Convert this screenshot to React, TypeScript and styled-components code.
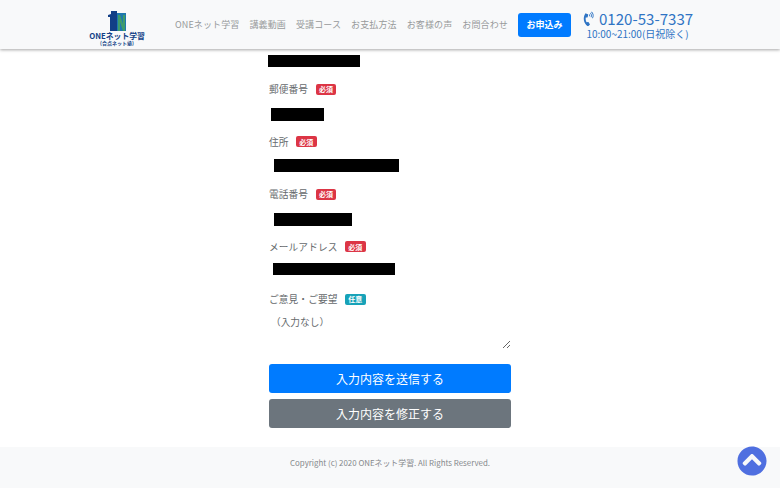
import styled, { createGlobalStyle } from "styled-components";
import { FaChevronCircleUp, FaPhoneVolume } from "react-icons/fa";

const fontStack = `"Noto Sans CJK JP", "Noto Sans", sans-serif`;

const navItems = ["ONEネット学習", "講義動画", "受講コース", "お支払方法", "お客様の声", "お問合わせ"];

const fields = [
  { label: "郵便番号", width: 53, left: 2, top: 11, height: 13 },
  { label: "住所", width: 125, left: 5, top: 9.5, height: 13 },
  { label: "電話番号", width: 78, left: 5, top: 11, height: 13 },
  { label: "メールアドレス", width: 122, left: 4, top: 8, height: 12 },
];

const App = () => {
  return (
    <Page>
      <GlobalStyle />
      <Header>
        <LogoBox>
          <svg width="18" height="21" viewBox="0 0 18 21">
            <path d="M0 5l3-1V1h6v20H2V7H0z" fill="#123f86" />
            <path d="M9 3h9v18H9z" fill="#1f78ad" />
            <path d="M10 21V5h2l3 9V5h2v16h-2l-3-9v9z" fill="#3f9c6a" />
          </svg>
          <LogoName>ONEネット学習</LogoName>
          <LogoSub>(合点ネット塾)</LogoSub>
        </LogoBox>
        <Nav>
          {navItems.map((item) => (
            <NavLink key={item}>{item}</NavLink>
          ))}
        </Nav>
        <ApplyButton>お申込み</ApplyButton>
        <Contact>
          <PhoneLine>
            <FaPhoneVolume size={14} />
            <span>0120-53-7337</span>
          </PhoneLine>
          <Hours>10:00~21:00(日祝除く)</Hours>
        </Contact>
      </Header>

      <Main>
        <TopValue>
          <Redacted $width={92} $left={-1} $top={6} $height={12} />
        </TopValue>
        {fields.map((field) => (
          <Group key={field.label}>
            <LabelRow>
              <Label>{field.label}</Label>
              <Badge $kind="required">必須</Badge>
            </LabelRow>
            <Redacted
              $width={field.width}
              $left={field.left}
              $top={field.top}
              $height={field.height}
            />
          </Group>
        ))}
        <LabelRow>
          <Label>ご意見・ご要望</Label>
          <Badge $kind="optional">任意</Badge>
        </LabelRow>
        <Message readOnly value="（入力なし）" />
        <Submit $variant="primary">入力内容を送信する</Submit>
        <Submit $variant="secondary">入力内容を修正する</Submit>
      </Main>

      <Footer>
        <Copyright>Copyright (c) 2020 ONEネット学習. All Rights Reserved.</Copyright>
        <ScrollTop aria-label="ページトップへ">
          <FaChevronCircleUp size={30} />
        </ScrollTop>
      </Footer>
    </Page>
  );
};

export default App;

const GlobalStyle = createGlobalStyle`
  html, body {
    margin: 0;
    padding: 0;
    background: #fff;
    font-family: ${fontStack};
  }
`;

const Page = styled.div`
  width: 780px;
  height: 488px;
  display: flex;
  flex-direction: column;
  overflow: hidden;
  position: relative;
`;

const Header = styled.header`
  height: 49px;
  flex-shrink: 0;
  display: flex;
  align-items: center;
  padding-left: 88px;
  background-color: #f8f9fa;
  box-shadow: 0 1px 3px rgba(0, 0, 0, 0.35);
  position: relative;
`;

const LogoBox = styled.div`
  width: 58px;
  display: flex;
  flex-direction: column;
  align-items: center;
  padding-top: 6px;

  svg {
    display: block;
    margin-bottom: 1px;
  }
`;

const LogoName = styled.div`
  font-size: 7.8px;
  line-height: 8px;
  font-weight: 700;
  color: #123f86;
  white-space: nowrap;
`;

const LogoSub = styled.div`
  font-size: 5px;
  line-height: 6px;
  font-weight: 700;
  color: #123f86;
  white-space: nowrap;
`;

const Nav = styled.nav`
  display: flex;
  gap: 10px;
  margin-left: 29px;
`;

const NavLink = styled.a`
  font-size: 9px;
  letter-spacing: 0.12px;
  color: #97999b;
  white-space: nowrap;
`;

const ApplyButton = styled.button`
  width: 53px;
  height: 24px;
  margin-left: 10px;
  padding: 0;
  border: none;
  border-radius: 3px;
  background-color: #007bff;
  color: #fff;
  font-family: ${fontStack};
  font-size: 9px;
  font-weight: 700;
`;

const Contact = styled.div`
  margin-left: 11px;
  display: flex;
  flex-direction: column;
  align-items: center;
  color: #2f74c4;
`;

const PhoneLine = styled.div`
  display: flex;
  align-items: center;
  gap: 3px;
  font-size: 15.1px;
  line-height: 19px;
  white-space: nowrap;

  svg {
    transform: rotate(-10deg);
  }
`;

const Hours = styled.div`
  font-size: 10px;
  line-height: 12px;
  white-space: nowrap;
`;

const Main = styled.main`
  width: 242px;
  flex: 1;
  margin-left: 269px;
  display: flex;
  flex-direction: column;
`;

const TopValue = styled.div`
  height: 32px;
`;

const Group = styled.div`
  height: 52.6px;
`;

const LabelRow = styled.div`
  height: 16px;
  display: flex;
  align-items: center;
  gap: 7.5px;
`;

const Label = styled.label`
  font-size: 9.7px;
  letter-spacing: 0.1px;
  color: #666a6d;
  white-space: nowrap;
`;

const Badge = styled.span<{ $kind: "required" | "optional" }>`
  width: 20.5px;
  height: 11px;
  border-radius: 2px;
  display: flex;
  align-items: center;
  justify-content: center;
  background-color: ${(p) => (p.$kind === "required" ? "#dc3545" : "#17a2b8")};
  color: #fff;
  font-size: 7px;
  font-weight: 700;
`;

const Redacted = styled.div<{ $width: number; $left: number; $top: number; $height: number }>`
  width: ${(p) => p.$width}px;
  height: ${(p) => p.$height}px;
  margin-left: ${(p) => p.$left}px;
  margin-top: ${(p) => p.$top}px;
  background-color: #000;
`;

const Message = styled.textarea`
  width: 242px;
  height: 42px;
  box-sizing: border-box;
  padding: 8px 2px 0;
  border: none;
  outline: none;
  background: transparent;
  resize: vertical;
  font-family: ${fontStack};
  font-size: 9.7px;
  color: #666a6d;
`;

const Submit = styled.button<{ $variant: "primary" | "secondary" }>`
  width: 100%;
  height: 29px;
  flex-shrink: 0;
  padding: 0;
  margin-top: 6px;
  border: none;
  border-radius: 3px;
  background-color: ${(p) => (p.$variant === "primary" ? "#007bff" : "#6c757d")};
  color: #fff;
  font-family: ${fontStack};
  font-size: 12px;

  &:first-of-type {
    margin-top: 15px;
  }
`;

const Footer = styled.footer`
  height: 41px;
  flex-shrink: 0;
  display: flex;
  align-items: center;
  justify-content: center;
  padding-bottom: 10px;
  box-sizing: border-box;
  background-color: #f8f9fa;
`;

const Copyright = styled.small`
  font-size: 7.9px;
  color: #85888b;
  white-space: nowrap;
`;

const ScrollTop = styled.a`
  position: absolute;
  right: 13px;
  bottom: 12px;
  width: 30px;
  height: 30px;
  color: #4f6fe0;

  svg {
    display: block;
  }
`;
